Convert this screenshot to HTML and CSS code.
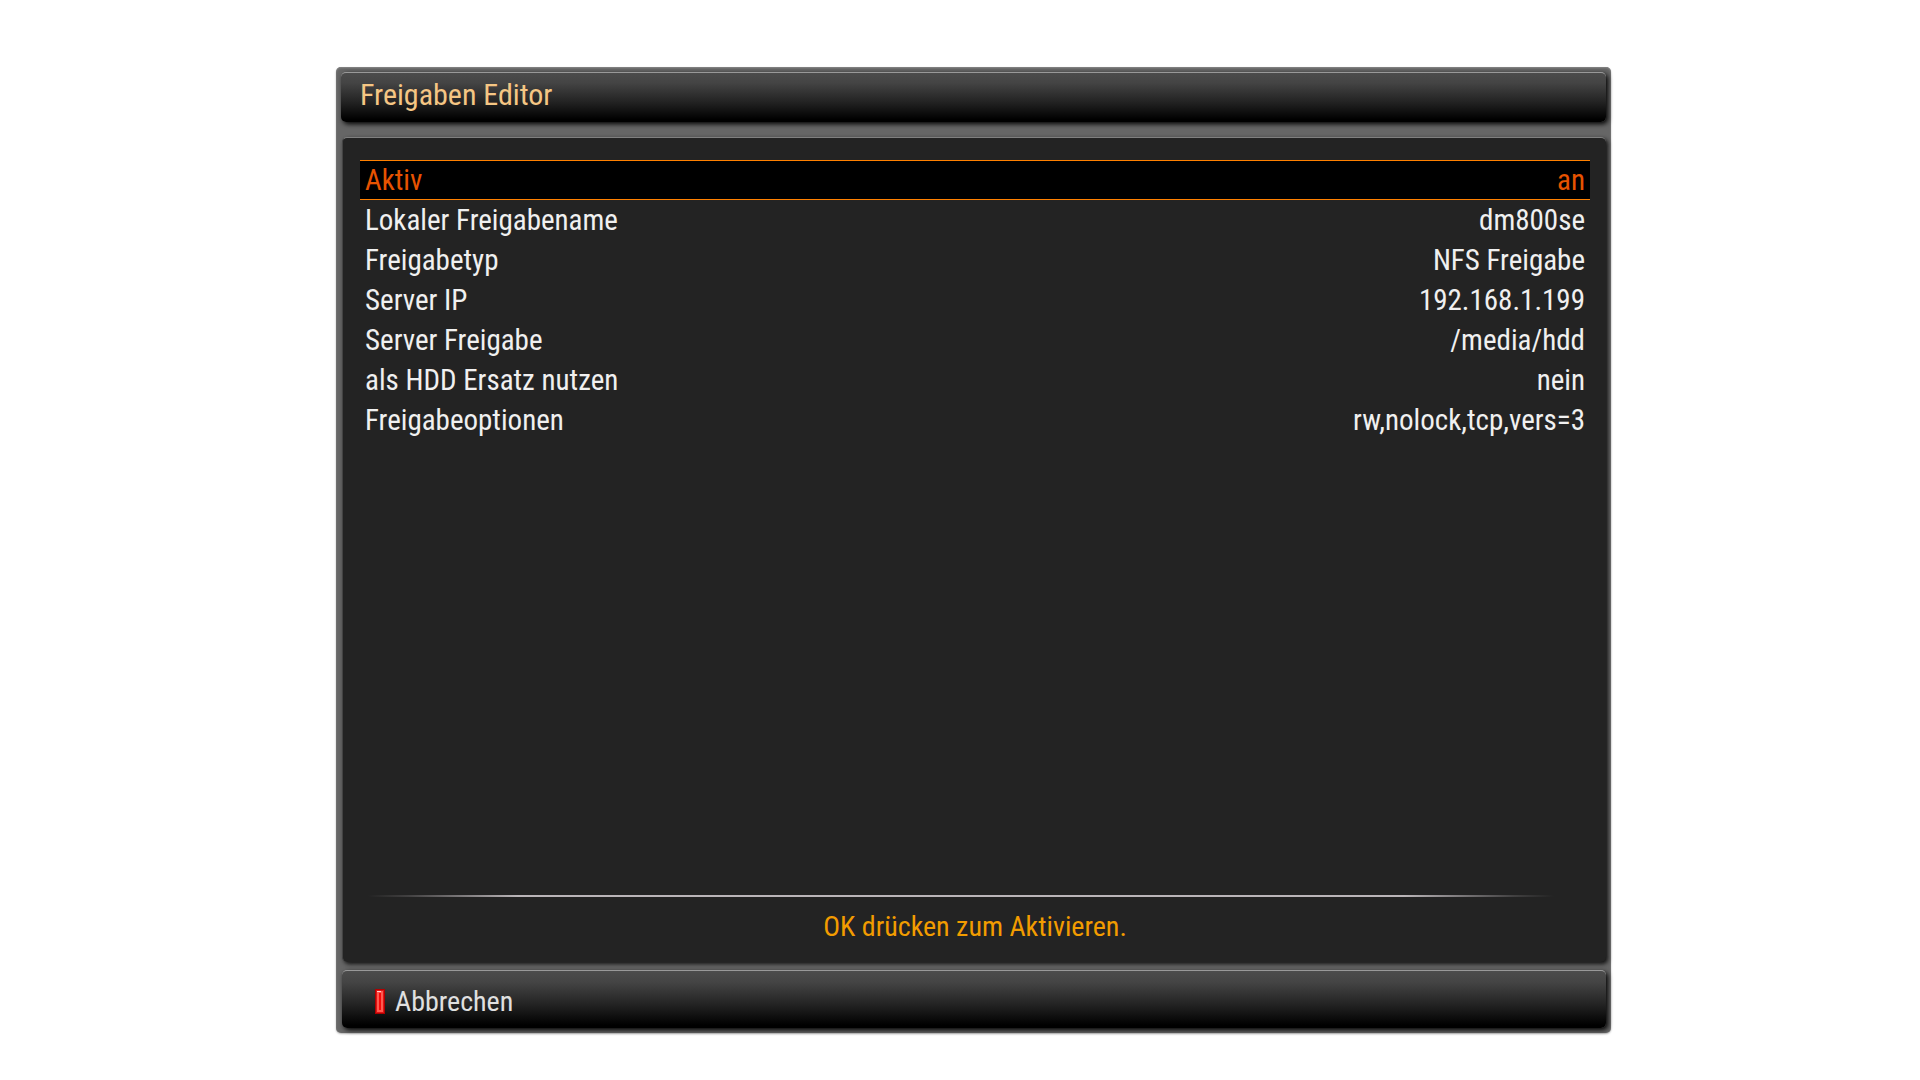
FILE: index.html
```html
<!DOCTYPE html>
<html lang="de">
<head>
  <meta charset="UTF-8">
  <meta name="viewport" content="width=device-width, initial-scale=1.0">
  <title>Freigaben Editor</title>
  <link rel="stylesheet" href="styles.css">
</head>
<body>

  <div class="window">
    <header class="bar title-bar">
      <h1>Freigaben Editor</h1>
    </header>

    <main class="panel">
      <table class="config">
        <tbody>
          <tr class="selected"><th scope="row">Aktiv</th><td>an</td></tr>
          <tr><th scope="row">Lokaler Freigabename</th><td>dm800se</td></tr>
          <tr><th scope="row">Freigabetyp</th><td>NFS Freigabe</td></tr>
          <tr><th scope="row">Server IP</th><td>192.168.1.199</td></tr>
          <tr><th scope="row">Server Freigabe</th><td>/media/hdd</td></tr>
          <tr><th scope="row">als HDD Ersatz nutzen</th><td>nein</td></tr>
          <tr><th scope="row">Freigabeoptionen</th><td>rw,nolock,tcp,vers=3</td></tr>
        </tbody>
      </table>

      <div class="info">
        <div class="divider"></div>
        <p class="hint">OK drücken zum Aktivieren.</p>
      </div>
    </main>

    <footer class="bar key-bar">
      <button class="key" type="button">
        <svg class="key-icon" width="10" height="25" viewBox="0 0 10 25" aria-hidden="true">
          <rect width="10" height="25" fill="#b00000"/>
          <rect x="1" y="1" width="8" height="23" fill="#e01414"/>
          <rect x="2" y="2" width="6" height="21" fill="#ff5a50"/>
          <rect x="2" y="2" width="4" height="1" fill="#ffd0d0"/>
          <rect x="4" y="4" width="2" height="17" fill="#f80a0a"/>
        </svg>
        Abbrechen
      </button>
    </footer>
  </div>

</body>
</html>
```

FILE: styles.css
```css
* {
  box-sizing: border-box;
}

body {
  margin: 0;
  min-height: 100vh;
  padding: 67px 309px 47px 336px;
  display: flex;
  background: #fff;
  font-family: 'Roboto Condensed', Roboto, sans-serif;
  font-size: 29px;
  line-height: 38px;
  color: #f0f0f0;
}

.window {
  flex: 1;
  display: flex;
  flex-direction: column;
  padding: 5px;
  border-radius: 5px;
  background: #666;
  box-shadow: inset 0 1px 2px #888, 0 1px 2px rgba(0, 0, 0, 0.3);
}

/* Title and key bars */
.bar {
  display: flex;
  align-items: center;
  border-top: 1px solid #999;
  border-radius: 5px;
  background: linear-gradient(#4c4c4c, #444 20%, #222 60%, #000 95%);
  box-shadow: 2px 2px 5px #000;
}

.title-bar {
  height: 50px;
  padding: 0 19px 6px;
}

h1 {
  margin: 0;
  font-size: 30px;
  font-weight: normal;
  color: #f5c684;
}

.panel {
  flex: 1;
  display: flex;
  flex-direction: column;
  margin: 15px 0 8px 1px;
  padding: 22px 16px 16px 17px;
  border-top: 1px solid #808080;
  border-left: 1px solid #444;
  border-radius: 5px;
  background: #232323;
  box-shadow: 2px 2px 4px #111;
}

/* Settings list */
.config {
  width: 100%;
  border-collapse: collapse;
}

.config th,
.config td {
  height: 40px;
  padding: 0 5px;
  font-weight: normal;
  text-align: left;
}

.config td {
  text-align: right;
}

.selected {
  background: #000;
  box-shadow: inset 0 1px #ff8000, inset 0 -1px #ff8000;
  color: #e85300;
}

.info {
  margin-top: auto;
}

.divider {
  height: 2px;
  margin: 0 36px 0 8px;
  background: linear-gradient(to right, transparent, rgba(186, 181, 184, 0.2) 40px, #bab5b8 150px, #bab5b8 calc(100% - 150px), rgba(186, 181, 184, 0.2) calc(100% - 40px), transparent);
}

.hint {
  margin: 11px 0 0;
  font-size: 28px;
  text-align: center;
  color: #f29c00;
}

.key-bar {
  height: 58px;
  margin-left: 1px;
  padding: 4px 33px 0;
}

.key {
  display: flex;
  align-items: center;
  gap: 10px;
  padding: 0;
  border: none;
  background: none;
  font: inherit;
  font-size: 28px;
  color: #e0e0e0;
  cursor: pointer;
}
```
